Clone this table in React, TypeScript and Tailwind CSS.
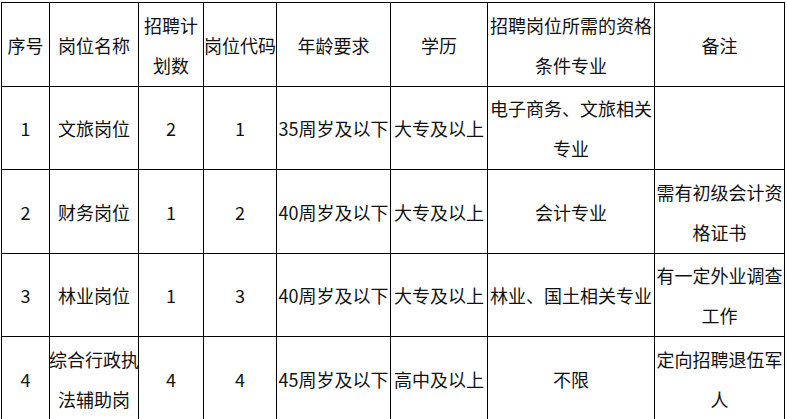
import React from "react";

const rows: string[][][] = [
  [["序号"], ["岗位名称"], ["招聘计", "划数"], ["岗位代码"], ["年龄要求"], ["学历"], ["招聘岗位所需的资格", "条件专业"], ["备注"]],
  [["1"], ["文旅岗位"], ["2"], ["1"], ["35周岁及以下"], ["大专及以上"], ["电子商务、文旅相关", "专业"], [""]],
  [["2"], ["财务岗位"], ["1"], ["2"], ["40周岁及以下"], ["大专及以上"], ["会计专业"], ["需有初级会计资", "格证书"]],
  [["3"], ["林业岗位"], ["1"], ["3"], ["40周岁及以下"], ["大专及以上"], ["林业、国土相关专业"], ["有一定外业调查", "工作"]],
  [["4"], ["综合行政执", "法辅助岗"], ["4"], ["4"], ["45周岁及以下"], ["高中及以上"], ["不限"], ["定向招聘退伍军", "人"]],
];

export default function App() {
  return (
    <div className="w-[787px] h-[419px] overflow-hidden bg-white">
      <div
        className="ml-px mt-[2px] w-[784px] grid gap-px p-px bg-black grid-cols-[47px_88px_64px_72px_113px_96px_166px_129px] grid-rows-[83px_82px_83px_82px_83px] text-[18px] text-[#111]"
        style={{ fontFamily: '"Noto Sans CJK SC", "Noto Sans", sans-serif' }}
      >
        {rows.map((row, ri) =>
          row.map((lines, ci) => (
            <div
              key={`${ri}-${ci}`}
              className="bg-white flex flex-col items-center justify-center text-center leading-[40px] whitespace-nowrap"
            >
              {lines.map((l, li) => (
                <span key={li}>{l}</span>
              ))}
            </div>
          ))
        )}
      </div>
    </div>
  );
}
